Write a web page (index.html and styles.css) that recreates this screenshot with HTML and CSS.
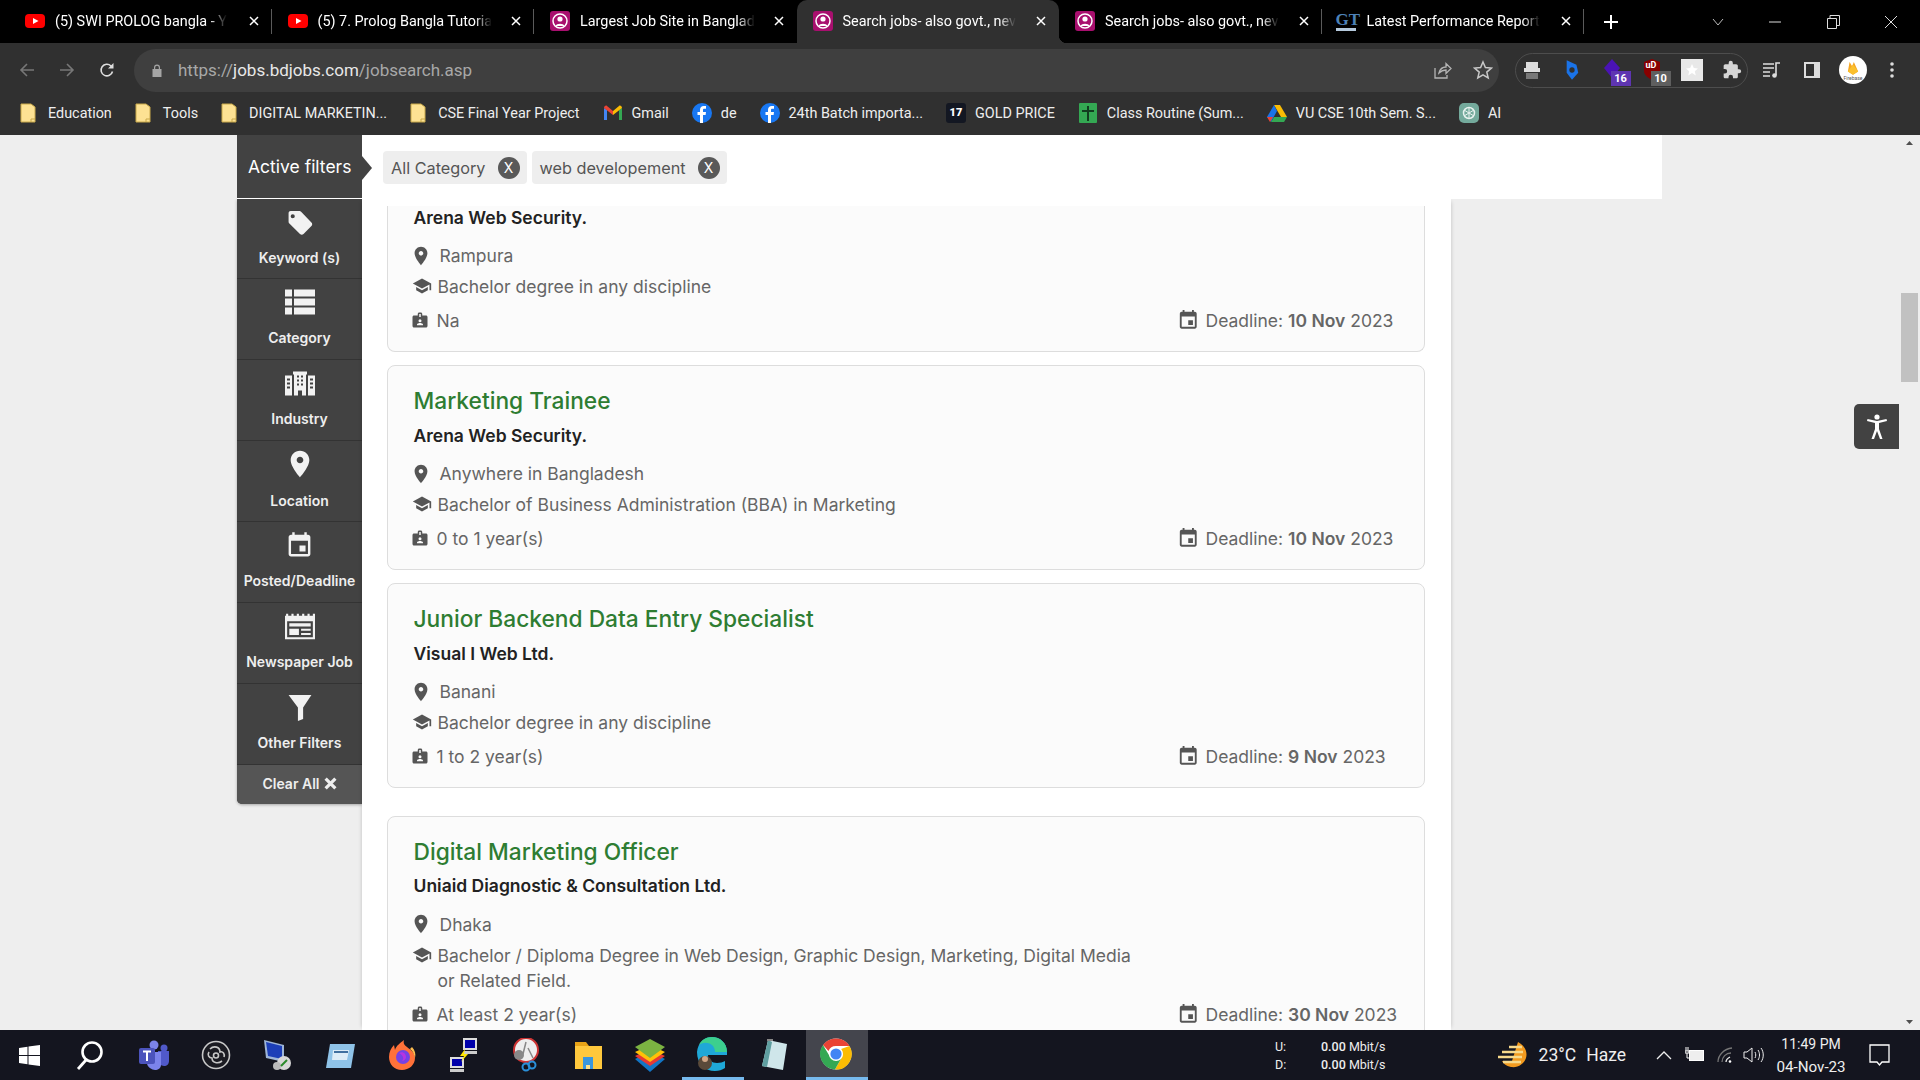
FILE: index.html
```html
<!DOCTYPE html>
<html lang="en">
<head>
  <meta charset="UTF-8">
  <title>Search jobs - Bdjobs</title>
  <link rel="stylesheet" href="styles.css">
</head>
<body>
  <!-- Shared icons -->
  <svg class="sprite" width="0" height="0">
    <symbol id="i-yt" viewBox="0 0 20 20"><rect x="0" y="3" width="20" height="14" rx="4" fill="#f00"/><path d="M8 7l5.5 3L8 13z" fill="#fff"/></symbol>
    <symbol id="i-bd" viewBox="0 0 20 20"><rect width="20" height="20" rx="3" fill="#a80f6e"/><circle cx="10" cy="10" r="7" fill="none" stroke="#fff" stroke-width="1.5"/><circle cx="10" cy="8" r="2.6" fill="#fff"/><path d="M5.5 15c1-3 8-3 9 0z" fill="#fff"/></symbol>
    <symbol id="i-folder" viewBox="0 0 16 20"><path d="M1 1h10l4 3v15H1z" fill="#fde293" stroke="#c9a94a"/><path d="M11 19v-3h4" fill="none" stroke="#c9a94a"/></symbol>
    <symbol id="i-fb" viewBox="0 0 20 20"><circle cx="10" cy="10" r="10" fill="#1877f2"/><path d="M11 20v-8h2.6l.4-3h-3V7.2c0-.9.3-1.4 1.5-1.4H14V3.1c-.4 0-1.300-.1-2.300-.1C9.500 3 8 4.300 8 6.800V9H5.500v3H8v8z" fill="#fff"/></symbol>
    <symbol id="i-place" viewBox="0 0 24 24"><path d="M12 2C8.130 2 5 5.130 5 9c0 5.250 7 13 7 13s7-7.750 7-13c0-3.870-3.130-7-7-7zm0 9.500c-1.380 0-2.500-1.120-2.500-2.500s1.120-2.500 2.500-2.500 2.500 1.120 2.500 2.500-1.120 2.500-2.500 2.500z"/></symbol>
    <symbol id="i-school" viewBox="0 0 24 24"><path d="M5 13.180v4L12 21l7-3.820v-4L12 17l-7-3.820zM12 3L1 9l11 6 9-4.910V17h2V9L12 3z"/></symbol>
    <symbol id="i-badge" viewBox="0 0 24 24"><path fill-rule="evenodd" d="M9 6V4c0-1.100.9-2 2-2h2c1.100 0 2 .9 2 2v2h5c1.100 0 2 .9 2 2v12c0 1.100-.9 2-2 2H4c-1.100 0-2-.9-2-2V8c0-1.100.9-2 2-2zm2-2v4h2V4zm1 7a2 2 0 100 4 2 2 0 000-4zm-4 8h8v-1c0-1.300-2.700-2-4-2s-4 .7-4 2z"/></symbol>
    <symbol id="i-event" viewBox="0 0 24 24"><path d="M17 12h-5v5h5v-5zM16 1v2H8V1H6v2H5c-1.110 0-1.990.9-1.990 2L3 19c0 1.100.89 2 2 2h14c1.100 0 2-.9 2-2V5c0-1.100-.9-2-2-2h-1V1h-2zm3 18H5V8h14v11z"/></symbol>
    <symbol id="i-close" viewBox="0 0 10 10"><path d="M1 1l8 8M9 1l-8 8" fill="none" stroke="currentColor" stroke-width="1.500"/></symbol>
  </svg>

  <!-- Tab strip -->
  <div class="tabstrip">
    <div class="tab"><svg class="favicon"><use href="#i-yt"/></svg><span class="tab-title">(5) SWI PROLOG bangla - Y</span><svg class="tab-x"><use href="#i-close"/></svg></div>
    <div class="tab"><svg class="favicon"><use href="#i-yt"/></svg><span class="tab-title">(5) 7. Prolog Bangla Tutoria</span><svg class="tab-x"><use href="#i-close"/></svg></div>
    <div class="tab tab-before-active"><svg class="favicon"><use href="#i-bd"/></svg><span class="tab-title">Largest Job Site in Banglad</span><svg class="tab-x"><use href="#i-close"/></svg></div>
    <div class="tab tab-active"><svg class="favicon"><use href="#i-bd"/></svg><span class="tab-title">Search jobs- also govt., nev</span><svg class="tab-x"><use href="#i-close"/></svg></div>
    <div class="tab"><svg class="favicon"><use href="#i-bd"/></svg><span class="tab-title">Search jobs- also govt., nev</span><svg class="tab-x"><use href="#i-close"/></svg></div>
    <div class="tab"><span class="favicon favicon-gt">GT</span><span class="tab-title">Latest Performance Report</span><svg class="tab-x"><use href="#i-close"/></svg></div>
    <div class="newtab"><svg width="16" height="16" viewBox="0 0 16 16"><path d="M8 1v14M1 8h14" stroke="#fff" stroke-width="2"/></svg></div>
    <div class="winctl">
      <div class="winbtn winbtn-wide"><svg width="12" height="8" viewBox="0 0 12 8"><path d="M1 1l5 6 5-6" fill="none" stroke="#bbb"/></svg></div>
      <div class="winbtn"><svg width="12" height="2" viewBox="0 0 12 2"><path d="M0 1h12" stroke="#ddd"/></svg></div>
      <div class="winbtn"><svg width="13" height="14" viewBox="0 0 13 14"><path d="M.5 3.500h9v10h-9zM3 3.500V.5h9.500v10H10" fill="none" stroke="#ddd"/></svg></div>
      <div class="winbtn"><svg width="14" height="14" viewBox="0 0 14 14"><path d="M1 1l12 12M13 1L1 13" stroke="#ddd"/></svg></div>
    </div>
  </div>

  <!-- Address bar -->
  <div class="toolbar">
    <svg class="nav-btn" viewBox="0 0 16 16"><path d="M15 8H2M8 2L2 8l6 6" fill="none" stroke="#777" stroke-width="1.600"/></svg>
    <svg class="nav-btn" viewBox="0 0 16 16"><path d="M1 8h13M8 2l6 6-6 6" fill="none" stroke="#777" stroke-width="1.600"/></svg>
    <svg class="nav-btn" viewBox="0 0 16 16"><path d="M13.500 9.500A5.800 5.800 0 1 1 12 4l1.500 1.500" fill="none" stroke="#ddd" stroke-width="1.600"/><path d="M14.500 1v5.500H9z" fill="#ddd"/></svg>
    <div class="urlbar">
      <svg class="lock" width="10" height="13" viewBox="0 0 10 13"><path d="M2 5V3.500a3 3 0 016 0V5h1.500v8H.5V5zm1.200 0h3.600V3.500a1.800 1.800 0 00-3.600 0z" fill="#a5a5a5"/></svg>
      <span class="url">https://<b>jobs.bdjobs.com</b>/jobsearch.asp</span>
      <svg class="url-share" width="20" height="20" viewBox="0 0 20 20"><path d="M3 8v10h12v-3M7 13c1-4 4-6 7-6V3.500l5 5-5 5V10c-3 0-5 1-7 3z" fill="none" stroke="#b5b5b5" stroke-width="1.300"/></svg>
      <svg class="url-star" width="20" height="20" viewBox="0 0 20 20"><path d="M10 2l2.400 5.600 6 .5-4.600 4 1.400 5.900L10 14.900 4.800 18l1.400-5.900-4.600-4 6-.5z" fill="none" stroke="#c8c8c8" stroke-width="1.500"/></svg>
    </div>
    <div class="extensions">
      <div class="ext"><svg width="20" height="22" viewBox="0 0 20 22"><path d="M4 3h12v6H4zM2 9h16v4H2z" fill="#ddd"/><path d="M4 14h12v6H4z" fill="#777"/></svg></div>
      <div class="ext"><svg width="16" height="24" viewBox="0 0 18 24"><path d="M3 1l11 5 2 9-7 8-6-8z" fill="#1a73e8"/><circle cx="9" cy="12" r="3" fill="#303030"/></svg></div>
      <div class="ext"><svg width="20" height="24" viewBox="0 0 20 24"><path d="M10 1l8 9-8 10-8-10z" fill="#4a13b5"/></svg><span class="ext-badge ext-badge-purple">16</span></div>
      <div class="ext"><svg width="20" height="24" viewBox="0 0 20 24"><path d="M10 1l8 3v9c0 4-4 7-8 9-4-2-8-5-8-9V4z" fill="#800"/></svg><span class="ext-mark">uD</span><span class="ext-badge ext-badge-gray">10</span></div>
      <div class="ext"><svg width="22" height="22" viewBox="0 0 22 22"><rect width="22" height="22" fill="#e8e8e8"/><path d="M11 5l1.800 4 4.200.4-3.200 2.800 1 4.200L11 14l-3.800 2.400 1-4.200L5 9.400 9.200 9z" fill="#fff"/></svg></div>
      <div class="ext"><svg width="20" height="20" viewBox="0 0 24 24"><path d="M20.500 11H19V7c0-1.100-.9-2-2-2h-4V3.500a2.500 2.500 0 00-5 0V5H4c-1.100 0-2 .9-2 2v3.800h1.500a2.700 2.700 0 010 5.400H2V20c0 1.100.9 2 2 2h3.800v-1.500a2.700 2.700 0 015.400 0V22H17c1.100 0 2-.9 2-2v-4h1.500a2.500 2.500 0 000-5z" fill="#d5d5d5"/></svg></div>
    </div>
    <svg class="tool-btn" width="20" height="20" viewBox="0 0 20 20"><path d="M1 4h11M1 8h11M1 12h7M1 16h7" stroke="#ddd" stroke-width="1.600"/><path d="M14 15V3h4" fill="none" stroke="#ddd" stroke-width="1.600"/><circle cx="12.500" cy="15.500" r="2.300" fill="#ddd"/></svg>
    <svg class="tool-btn" width="20" height="20" viewBox="0 0 20 20"><path fill-rule="evenodd" d="M2 2h16v16H2zm2 2v12h8V4z" fill="#ddd"/></svg>
    <div class="avatar"><svg width="12" height="16" viewBox="0 0 14 18"><path d="M1 13L3 2l3 5 2-5 5 11-6 4z" fill="#f5a623"/><path d="M1 13l6-8 6 8-6 4z" fill="#fbc02d"/></svg><span class="avatar-label">Firebase</span></div>
    <svg class="tool-btn" width="6" height="18" viewBox="0 0 6 18"><circle cx="3" cy="3" r="1.800" fill="#ddd"/><circle cx="3" cy="9" r="1.800" fill="#ddd"/><circle cx="3" cy="15" r="1.800" fill="#ddd"/></svg>
  </div>

  <!-- Bookmarks -->
  <div class="bookmarks">
    <a class="bm"><svg class="bm-folder"><use href="#i-folder"/></svg>Education</a>
    <a class="bm"><svg class="bm-folder"><use href="#i-folder"/></svg>Tools</a>
    <a class="bm"><svg class="bm-folder"><use href="#i-folder"/></svg>DIGITAL MARKETIN...</a>
    <a class="bm"><svg class="bm-folder"><use href="#i-folder"/></svg>CSE Final Year Project</a>
    <a class="bm"><svg class="bm-icon" viewBox="0 0 20 16"><path d="M1 15V3l3 2v10z" fill="#4285f4"/><path d="M16 15V5l3-2v12z" fill="#34a853"/><path d="M1 3c0-2 2-3 3-2l6 5v4L1 3z" fill="#ea4335"/><path d="M19 3c0-2-2-3-3-2l-6 5v4z" fill="#fbbc04"/></svg>Gmail</a>
    <a class="bm"><svg class="bm-icon"><use href="#i-fb"/></svg>de</a>
    <a class="bm"><svg class="bm-icon"><use href="#i-fb"/></svg>24th Batch importa...</a>
    <a class="bm"><span class="bm-icon bm-tv">17</span>GOLD PRICE</a>
    <a class="bm"><svg class="bm-icon" viewBox="0 0 20 20"><rect x="1" y="0" width="18" height="20" rx="1" fill="#34a853"/><path d="M10 3v15M4 8h12" stroke="#123d20" stroke-width="2"/></svg>Class Routine (Sum...</a>
    <a class="bm"><svg class="bm-icon" viewBox="0 0 20 18"><path d="M7 1h6l7 12h-6z" fill="#fbbc04"/><path d="M7 1l3 6-6 11-4-5z" fill="#1a73e8"/><path d="M4 18l3-5h13l-3 5z" fill="#34a853"/><path d="M0 13l3 5 3-5z" fill="#ea4335"/></svg>VU CSE 10th Sem. S...</a>
    <a class="bm"><svg class="bm-icon" viewBox="0 0 20 20"><rect width="20" height="20" rx="5" fill="#74aa9c"/><circle cx="10" cy="10" r="5.500" fill="none" stroke="#e8f2ef" stroke-width="1.500"/><path d="M10 4.500v11M5 7l10 6M15 7L5 13" stroke="#e8f2ef"/></svg>AI</a>
  </div>

  <!-- Page -->
  <main class="page">
    <div class="wrap">
      <div class="active-filters">
        <div class="af-label">Active filters</div>
        <div class="chip">All Category<span class="chip-x">X</span></div>
        <div class="chip">web developement<span class="chip-x">X</span></div>
      </div>
      <div class="body">
        <nav class="sidebar">
          <a class="side-item"><svg class="side-icon" viewBox="0 0 26 26"><path fill-rule="evenodd" d="M2 2h10c1 0 1.600.3 2.300 1l9.700 10c1 1 1 2.400 0 3.400L16.400 24c-1 1-2.400 1-3.400 0L3 14.300c-.7-.7-1-1.300-1-2.300V4c0-1.100.9-2 2-2zm4 3a2 2 0 100 4 2 2 0 000-4z" /></svg>Keyword (s)</a>
          <a class="side-item"><svg class="side-icon" viewBox="0 0 30 26"><path d="M0 0h7v7H0zM9 0h21v7H9zM0 9h7v7H0zM9 9h21v7H9zM0 18h7v7H0zM9 18h21v7H9z"/></svg>Category</a>
          <a class="side-item"><svg class="side-icon" viewBox="0 0 30 26"><path fill-rule="evenodd" d="M8 1h14v3h-1v21h-4v-5h-4v5H9V4H8zm4 4v2h2V5zm4 0v2h2V5zm-4 4v2h2V9zm4 0v2h2V9zm-4 4v2h2v-2zm4 0v2h2v-2zM0 5h7v20H0zm2 3v2h3V8zm0 4v2h3v-2zm0 4v2h3v-2zM23 5h7v20h-7zm2 3v2h3V8zm0 4v2h3v-2zm0 4v2h3v-2z"/></svg>Industry</a>
          <a class="side-item"><svg class="side-icon side-icon-pin"><use href="#i-place"/></svg>Location</a>
          <a class="side-item"><svg class="side-icon side-icon-event"><use href="#i-event"/></svg>Posted/Deadline</a>
          <a class="side-item"><svg class="side-icon" viewBox="0 0 28 24"><path fill-rule="evenodd" d="M0 2h28v22H0zm2 5v15h24V7zm2 2h20v3H4zm0 5h9v6H4zm11 0h9v2h-9zm0 4h9v2h-9zM1 0h2v2H1zm5 0h2v2H6zm5 0h2v2h-2zm5 0h2v2h-2zm5 0h2v2h-2zm5 0h2v2h-2z"/></svg>Newspaper Job</a>
          <a class="side-item"><svg class="side-icon" viewBox="0 0 24 26"><path d="M1 1h22l-8 12v11l-5 2V13z"/></svg>Other Filters</a>
          <a class="clear-all">Clear All <svg width="13" height="13" viewBox="0 0 12 12"><path d="M1.500 1.500l9 9M10.500 1.500l-9 9" stroke="#eee" stroke-width="3"/></svg></a>
        </nav>

        <section class="results">
          <article class="card card-cut">
            <div class="company">Arena Web Security.</div>
            <div class="row row-loc"><svg class="ico-place"><use href="#i-place"/></svg>Rampura</div>
            <div class="row row-edu"><svg class="ico-school"><use href="#i-school"/></svg><span class="edu-text">Bachelor degree in any discipline</span></div>
            <div class="row row-exp"><svg class="ico-badge"><use href="#i-badge"/></svg>Na<span class="deadline"><svg class="ico-event"><use href="#i-event"/></svg>Deadline:&nbsp;<b>10 Nov</b>&nbsp;2023</span></div>
          </article>
          <article class="card">
            <h3 class="job-title">Marketing Trainee</h3>
            <div class="company">Arena Web Security.</div>
            <div class="row row-loc"><svg class="ico-place"><use href="#i-place"/></svg>Anywhere in Bangladesh</div>
            <div class="row row-edu"><svg class="ico-school"><use href="#i-school"/></svg><span class="edu-text">Bachelor of Business Administration (BBA) in Marketing</span></div>
            <div class="row row-exp"><svg class="ico-badge"><use href="#i-badge"/></svg>0 to 1 year(s)<span class="deadline"><svg class="ico-event"><use href="#i-event"/></svg>Deadline:&nbsp;<b>10 Nov</b>&nbsp;2023</span></div>
          </article>
          <article class="card">
            <h3 class="job-title">Junior Backend Data Entry Specialist</h3>
            <div class="company">Visual I Web Ltd.</div>
            <div class="row row-loc"><svg class="ico-place"><use href="#i-place"/></svg>Banani</div>
            <div class="row row-edu"><svg class="ico-school"><use href="#i-school"/></svg><span class="edu-text">Bachelor degree in any discipline</span></div>
            <div class="row row-exp"><svg class="ico-badge"><use href="#i-badge"/></svg>1 to 2 year(s)<span class="deadline"><svg class="ico-event"><use href="#i-event"/></svg>Deadline:&nbsp;<b>9 Nov</b>&nbsp;2023</span></div>
          </article>
          <article class="card card-gap">
            <h3 class="job-title">Digital Marketing Officer</h3>
            <div class="company">Uniaid Diagnostic &amp; Consultation Ltd.</div>
            <div class="row row-loc"><svg class="ico-place"><use href="#i-place"/></svg>Dhaka</div>
            <div class="row row-edu"><svg class="ico-school"><use href="#i-school"/></svg><span class="edu-text">Bachelor / Diploma Degree in Web Design, Graphic Design, Marketing, Digital Media or Related Field.</span></div>
            <div class="row row-exp"><svg class="ico-badge"><use href="#i-badge"/></svg>At least 2 year(s)<span class="deadline"><svg class="ico-event"><use href="#i-event"/></svg>Deadline:&nbsp;<b>30 Nov</b>&nbsp;2023</span></div>
          </article>
        </section>
      </div>
    </div>

    <!-- Floating bits -->
    <div class="access-btn"><svg width="22" height="26" viewBox="0 0 22 26"><circle cx="11" cy="3" r="2.600" fill="#fff"/><path d="M1 7l8 2v6l-3.500 10h2.500L11 17l3 8h2.500L13 15V9l8-2-.5-2L11 7 1.500 5z" fill="#fff"/></svg></div>
    <div class="scrollbar">
      <svg width="17" height="17" viewBox="0 0 17 17"><path d="M5 10l3.500-4 3.500 4z" fill="#505050"/></svg>
      <div class="scroll-thumb"></div>
      <svg class="scroll-down" width="17" height="17" viewBox="0 0 17 17"><path d="M5 7l3.500 4 3.500-4z" fill="#505050"/></svg>
    </div>
  </main>

  <!-- Windows taskbar -->
  <footer class="taskbar">
    <div class="task-icons">
      <div class="task"><svg width="21" height="21" viewBox="0 0 21 21"><path d="M0 3l8.500-1.200V10H0zM9.500 1.600L21 0v10H9.500zM0 11h8.500v8.200L0 18zM9.500 11H21v10L9.500 19.400z" fill="#fff"/></svg></div>
      <div class="task task-search"><svg width="28" height="30" viewBox="0 0 28 30"><circle cx="16" cy="12" r="9.500" fill="none" stroke="#fff" stroke-width="2.600"/><path d="M10 20L2 29" stroke="#fff" stroke-width="2.800"/></svg></div>
      <div class="task"><svg width="32" height="30" viewBox="0 0 32 30"><circle cx="16" cy="5" r="4.500" fill="#7b83eb"/><circle cx="26" cy="8" r="3.500" fill="#5059c9"/><path d="M20 11h11v10c0 3-2 5-5 5s-6-3-6-5z" fill="#5059c9"/><path d="M9 12h14v13c0 3-3 5-6 5s-8-3-8-7z" fill="#7b83eb"/><rect x="1" y="8" width="16" height="16" rx="2" fill="#4b53bc"/><path d="M5 11.500h8M9 11.500V21" stroke="#fff" stroke-width="2"/></svg></div>
      <div class="task"><svg width="30" height="30" viewBox="0 0 30 30"><circle cx="15" cy="15" r="13.500" fill="#1b1b22" stroke="#c8c8c8" stroke-width="1.600"/><path d="M9 9c4-4 10-2 10 3 3-1 5 2 4 5M21 21c-4 3-10 2-10-3-3 0-5-3-3-6M15 13a2.500 2.500 0 100 5 2.500 2.500 0 000-5z" fill="none" stroke="#c8c8c8" stroke-width="1.600"/></svg></div>
      <div class="task"><svg width="30" height="32" viewBox="0 0 30 32"><path d="M1 1l20 5v17L3 19z" fill="#9fb6d8"/><path d="M3 3l16 4v13L5 17z" fill="#1d3fb8"/><circle cx="21" cy="24" r="7" fill="#d8d8d8"/><circle cx="14" cy="27" r="4" fill="#bbb"/><path d="M18 27l6-6" stroke="#2a8a2a" stroke-width="2"/></svg></div>
      <div class="task"><svg width="30" height="26" viewBox="0 0 30 26"><path d="M5 2h25l-4 24H1z" fill="#8fc3e8"/><path d="M8 8h16l-2 10H7z" fill="#dcecf7"/><path d="M9 9h14v2H9z" fill="#3f6f9f"/></svg></div>
      <div class="task"><svg width="28" height="32" viewBox="0 0 28 32"><path d="M14 31C6 31 1 25 1 18 1 13 3 9 6 6l1 5c1-4 5-7 9-10-1 3 0 5 3 7 4 3 8 6 8 11 0 7-6 12-13 12z" fill="#ff7139"/><path d="M24 8c3 3 4 7 3 11-1-4-2-7-5-9z" fill="#ffbd4f"/><circle cx="15" cy="18" r="7" fill="#7542e5"/><path d="M11 14c3-2 7 0 7 4 0 2-2 4-4 4 2-2 2-5-3-8z" fill="#b833e1"/></svg></div>
      <div class="task"><svg width="30" height="36" viewBox="0 0 30 36"><rect x="14" y="1" width="14" height="12" fill="#ddd"/><rect x="16" y="3" width="10" height="8" fill="#0000aa"/><rect x="15" y="14" width="13" height="3" fill="#ccc"/><rect x="1" y="20" width="14" height="11" fill="#ddd"/><rect x="3" y="22" width="10" height="7" fill="#0000aa"/><rect x="1" y="32" width="14" height="3" fill="#ccc"/><path d="M16 12l-5 7h4l-3 6 7-8h-4z" fill="#ffe600"/></svg></div>
      <div class="task"><svg width="30" height="34" viewBox="0 0 30 34"><ellipse cx="15" cy="12" rx="12" ry="12" fill="#eee" stroke="#c33" stroke-width="2"/><path d="M15 4l-3 12M22 20l-5-10" stroke="#888" stroke-width="1.500"/><circle cx="8" cy="17" r="5" fill="#888"/><circle cx="21" cy="27" r="3.500" fill="none" stroke="#2a8fd8" stroke-width="2"/><circle cx="15" cy="29" r="3.500" fill="none" stroke="#2a8fd8" stroke-width="2"/></svg></div>
      <div class="task"><svg width="28" height="28" viewBox="0 0 28 28"><path d="M1 1h11l3 4H1z" fill="#e8a317"/><rect x="1" y="5" width="27" height="23" fill="#ffc83d"/><path d="M9 16h10v12H9z" fill="#3a96dd"/><path d="M12 24h4v4h-4z" fill="#ffe08a"/></svg></div>
      <div class="task"><svg width="30" height="34" viewBox="0 0 30 34"><path d="M15 14l15 7-15 13L0 21z" fill="#1275c4"/><path d="M15 11l15 7-15 10L0 18z" fill="#e53935"/><path d="M15 7l15 7-15 10L0 14z" fill="#ffc107"/><path d="M15 1l15 8-15 11L0 9z" fill="#7cb342"/></svg></div>
      <div class="task"><svg width="31" height="34" viewBox="0 0 31 34"><path d="M1 15C2 6 8 0 16 0c8 0 15 6 15 15v3H12c0 5 4 8 9 8 3 0 6-1 8-2v7c-3 2-6 3-10 3C9 34 1 27 1 15z" fill="#1fa8d8"/><path d="M31 15C31 6 24 0 16 0 10 0 5 3 3 8c4-3 9-3 13 0 2 2 3 4 3 7z" fill="#3ccf8e"/><circle cx="9" cy="26" r="7" fill="#5a4a3a"/><circle cx="9" cy="22" r="3" fill="#d0a888"/></svg></div>
      <div class="task"><svg width="26" height="32" viewBox="0 0 26 32"><path d="M7 1l19 4-4 26L1 27z" fill="#cfe6ea"/><path d="M7 1L1 27l5 1 5-25z" fill="#5f9ea0"/><path d="M6 0h6v2H6z" fill="#888"/></svg></div>
      <div class="task task-active"><svg width="32" height="32" viewBox="0 0 32 32"><circle cx="16" cy="16" r="15.500" fill="#fff"/><path d="M16 .5A15.500 15.500 0 0129.500 8H16a8 8 0 00-7.500 5L3 7A15.500 15.500 0 0116 .5z" fill="#ea4335"/><path d="M29.500 8A15.500 15.500 0 0115 31.500L22 19a8 8 0 00-1-8z" fill="#fbbc04"/><path d="M15 31.500A15.500 15.500 0 013 7l6.500 11a8 8 0 0012.500 1z" fill="#34a853"/><circle cx="16" cy="16" r="7" fill="#fff"/><circle cx="16" cy="16" r="5.600" fill="#4285f4"/></svg></div>
    </div>
    <div class="netspeed">
      <span>U:</span><span><b>0.00</b> Mbit/s</span>
      <span>D:</span><span><b>0.00</b> Mbit/s</span>
    </div>
    <svg class="weather-icon" width="31" height="26" viewBox="0 0 31 26"><path d="M21 0c6 3 10 9 8 16-2 6-8 10-15 9-5-1-8-4-9-6h10z" fill="#f29a1f"/><path d="M12 5h13M5 10h21M1 15h24M6 20h18" stroke="#f7d98b" stroke-width="2.400"/></svg>
    <div class="weather"><span>23°C</span><span>Haze</span></div>
    <svg class="tray-chevron" width="16" height="9" viewBox="0 0 16 9"><path d="M1 8l7-7 7 7" fill="none" stroke="#eee" stroke-width="1.300"/></svg>
    <svg class="tray-battery" width="20" height="16" viewBox="0 0 20 16"><path d="M1 0v4M3 0v4M0 4h4v2H0zM2 6v5h2" fill="none" stroke="#fff"/><rect x="4.500" y="3.500" width="14" height="10" fill="#eee" stroke="#fff"/></svg>
    <svg class="tray-wifi" width="16" height="16" viewBox="0 0 16 16"><path d="M1 15C1 8 7 2 15 1M5 15c0-5 4-9 9-9" fill="none" stroke="#777" stroke-width="1.300"/><path d="M9 15c0-3 2-4 4-5" fill="none" stroke="#eee" stroke-width="1.300"/><circle cx="13" cy="14.500" r="1.300" fill="#fff"/></svg>
    <svg class="tray-volume" width="21" height="18" viewBox="0 0 21 18"><path d="M1 6h3l5-4v14l-5-4H1zM12 6c1 2 1 4 0 6M15 4c2 3 2 7 0 10M18 2c3 4 3 10 0 14" fill="none" stroke="#eee"/></svg>
    <div class="clock"><div class="clock-time">11:49 PM</div><div>04-Nov-23</div></div>
    <svg class="tray-notify" width="21" height="23" viewBox="0 0 21 23"><path d="M1 1h19v17h-7l-2.500 3L8 18H1z" fill="none" stroke="#fff" stroke-width="1.300"/></svg>
  </footer>
</body>
</html>
```

FILE: styles.css
```css
/* Global */
* {
  box-sizing: border-box;
}
html, body {
  height: 100%;
}
body {
  margin: 0;
  display: flex;
  flex-direction: column;
  height: 1080px;
  overflow: hidden;
  font-family: Inter, "Liberation Sans", sans-serif;
  background-color: #eee;
}
.sprite {
  position: absolute;
}

/* Tab strip */
.tabstrip {
  display: flex;
  align-items: stretch;
  height: 43px;
  padding-left: 9px;
  background-color: #000;
  color: #fff;
  font-family: Roboto, sans-serif;
  font-size: 14.400px;
}
.tab {
  position: relative;
  display: flex;
  align-items: center;
  width: 262.500px;
  padding: 0 13px 1px 16px;
}
.tab::after {
  content: "";
  position: absolute;
  right: 0;
  top: 9px;
  height: 25px;
  width: 1px;
  background-color: #5a5a5a;
}
.tab-before-active::after,
.tab-active::after {
  display: none;
}
.tab-active {
  background-color: #303030;
  border-radius: 10px 10px 0 0;
}
.tab-active::before {
  content: "";
  position: absolute;
  right: -8px;
  bottom: 0;
  width: 8px;
  height: 8px;
  background: radial-gradient(circle at 100% 0, #000 8px, #303030 8.5px);
}
.favicon {
  flex: none;
  width: 20px;
  height: 20px;
  margin-right: 10px;
}
.favicon-gt {
  margin-left: -2px;
  margin-right: 11px;
  font-family: "Liberation Serif", serif;
  font-weight: bold;
  font-size: 17px;
  line-height: 17px;
  color: #4d82b8;
  border-bottom: 3px solid #b5c9dc;
}
.tab-title {
  white-space: nowrap;
  -webkit-mask-image: linear-gradient(to right, #000 90%, transparent);
  mask-image: linear-gradient(to right, #000 90%, transparent);
}
.tab-x {
  flex: none;
  width: 10px;
  height: 10px;
  margin-left: auto;
  color: #fff;
}
.newtab {
  display: flex;
  align-items: center;
  margin-left: 19px;
}
.winctl {
  display: flex;
  margin-left: auto;
}
.winbtn {
  display: flex;
  align-items: center;
  justify-content: center;
  width: 58px;
}
.winbtn-wide {
  width: 56px;
}

/* Toolbar */
.toolbar {
  display: flex;
  align-items: center;
  height: 54px;
  padding-left: 19px;
  background-color: #303030;
}
.nav-btn {
  width: 16px;
  height: 16px;
  margin-right: 24px;
  flex: none;
}
.urlbar {
  display: flex;
  align-items: center;
  flex: none;
  width: 1365px;
  height: 43px;
  margin-left: -5px;
  padding: 0 6px 0 18px;
  border-radius: 22px;
  background-color: #3f3f3f;
  font-family: Roboto, sans-serif;
  font-size: 17px;
  color: #a8a8a8;
}
.lock {
  margin-right: 16px;
}
.url b {
  font-weight: 400;
  color: #e8e8e8;
}
.url-share {
  margin-left: auto;
  margin-right: 21px;
}
.extensions {
  display: flex;
  align-items: center;
  justify-content: center;
  flex: none;
  width: 233px;
  height: 35px;
  margin-left: 16px;
  border: 1px solid #4d4d4d;
  border-radius: 18px;
}
.ext {
  position: relative;
  display: flex;
  align-items: center;
  justify-content: center;
  flex: none;
  width: 40px;
}
.ext-badge {
  position: absolute;
  left: 19px;
  top: 13px;
  width: 20px;
  height: 15px;
  font-family: Roboto, sans-serif;
  font-size: 11px;
  font-weight: 700;
  line-height: 15px;
  text-align: center;
  color: #fff;
}
.ext-badge-purple {
  background-color: #5e35b1;
}
.ext-badge-gray {
  background-color: #5f5f5f;
}
.ext-mark {
  position: absolute;
  left: 14px;
  top: 2px;
  font-family: Roboto, sans-serif;
  font-size: 9px;
  font-weight: 700;
  color: #fff;
}
.tool-btn {
  flex: none;
  margin-left: 14px;
}
.tool-btn + .tool-btn {
  margin-left: 20px;
}
.avatar {
  display: flex;
  flex-direction: column;
  align-items: center;
  justify-content: center;
  flex: none;
  width: 28px;
  height: 28px;
  margin-left: 17px;
  margin-right: 2px;
  border-radius: 50%;
  background-color: #fff;
}
.avatar-label {
  font-family: Roboto, sans-serif;
  font-size: 5px;
  line-height: 5px;
  color: #555;
}
.avatar + .tool-btn {
  margin-left: 20px;
}

/* Bookmarks */
.bookmarks {
  display: flex;
  align-items: center;
  gap: 23px;
  height: 38px;
  padding: 0 0 6px 20px;
  background-color: #303030;
  color: #eee;
  font-family: Roboto, sans-serif;
  font-size: 14.400px;
  white-space: nowrap;
}
.bm {
  display: flex;
  align-items: center;
}
.bm-folder {
  width: 16px;
  height: 20px;
  margin-right: 12px;
}
.bm-icon {
  width: 20px;
  height: 20px;
  margin-right: 9px;
}
.bm-tv {
  display: block;
  background-color: #131722;
  border-radius: 3px;
  font-size: 11px;
  font-weight: 900;
  line-height: 20px;
  text-align: center;
  color: #fff;
}

/* Page */
.page {
  position: relative;
  flex: 1;
  min-height: 0;
  overflow: hidden;
  padding-left: 237px;
  background-color: #eee;
}
.wrap {
  display: flex;
  flex-direction: column;
  height: 100%;
  width: 1425px;
}

/* Active filters */
.active-filters {
  position: relative;
  z-index: 2;
  display: flex;
  align-items: center;
  flex: none;
  gap: 5px;
  height: 64px;
  padding-top: 1px;
  background-color: #fff;
  font-size: 16.250px;
  color: #555;
}
.af-label {
  position: relative;
  display: flex;
  align-items: center;
  align-self: stretch;
  width: 125px;
  margin: -1px 16px 0 0;
  padding: 0 0 0 11px;
  border-bottom: 1px solid #fff;
  background-color: #424242;
  color: #fff;
  font-size: 17.500px;
}
.af-label::after {
  content: "";
  position: absolute;
  left: 100%;
  top: 21px;
  border-left: 10px solid #424242;
  border-top: 12px solid transparent;
  border-bottom: 12px solid transparent;
}
.chip {
  display: flex;
  align-items: center;
  justify-content: space-between;
  gap: 12px;
  height: 33px;
  padding: 0 7px 0 8px;
  border-radius: 4px;
  background-color: #eee;
}
.chip-x {
  width: 22px;
  height: 22px;
  border-radius: 50%;
  background-color: #595959;
  color: #fff;
  font-size: 14px;
  line-height: 22px;
  text-align: center;
}

/* Sidebar */
.body {
  display: flex;
  flex: 1;
  min-height: 0;
  width: 1214px;
}
.sidebar {
  flex: none;
  align-self: flex-start;
  width: 125px;
  border-radius: 0 0 0 5px;
  overflow: hidden;
  background-color: #424242;
  box-shadow: 0 1px 3px rgba(0,0,0,0.3);
}
.side-item {
  display: flex;
  flex-direction: column;
  align-items: center;
  height: 81px;
  padding-top: 10px;
  border-bottom: 1px solid #333;
  color: #eee;
  font-size: 14px;
  font-weight: 600;
  line-height: 20px;
}
.side-item:first-child {
  height: 80px;
}
.side-icon {
  flex: none;
  width: 30px;
  height: 27px;
  margin-bottom: 12px;
  fill: #f2f2f2;
}
.side-icon-pin {
  width: 32px;
  height: 32px;
  margin: -3px 0 10.500px;
}
.side-icon-event {
  width: 29px;
  height: 29px;
  margin: -1px 0 11px;
}
.clear-all {
  display: flex;
  align-items: center;
  justify-content: center;
  gap: 4px;
  height: 39px;
  padding-bottom: 2px;
  background-color: #555;
  color: #eee;
  font-size: 14px;
  font-weight: 600;
}

/* Result list */
.results {
  flex: none;
  width: 1089px;
  height: 100%;
  overflow: hidden;
  padding: 0 26px 0 25px;
  background-color: #fff;
  box-shadow: -3px 0 4px -3px rgba(0,0,0,0.2), 3px 0 4px -3px rgba(0,0,0,0.2);
}
.card {
  margin-bottom: 13px;
  padding: 19px 26px 18px 25.500px;
  border: 1px solid #ddd;
  border-radius: 8px;
  background-color: #fbfbfb;
}
.card-cut {
  padding-top: 0;
  border-top: none;
  border-radius: 0 0 8px 8px;
}
.card-cut .company {
  margin-top: 7px;
}
.card-gap {
  margin-top: 27.500px;
}
.job-title {
  margin: 0;
  font-size: 22.750px;
  font-weight: 500;
  line-height: 32px;
  color: #2e7d32;
}
.company {
  margin-top: 6.500px;
  font-size: 17.500px;
  font-weight: 600;
  line-height: 24px;
  color: #222;
}
.row {
  display: flex;
  align-items: flex-start;
  font-size: 17.500px;
  line-height: 25px;
  color: #666;
}
.row svg {
  fill: #555;
  flex: none;
}
.row-loc {
  margin-top: 13.400px;
}
.row-edu {
  margin-top: 6px;
}
.row-exp {
  margin-top: 9px;
}
.edu-text {
  max-width: 700px;
}
.ico-place {
  width: 22px;
  height: 22px;
  margin: 1.500px 7.600px 0 -3.600px;
}
.ico-school {
  width: 20px;
  height: 20px;
  margin: 2px 5.800px 0 -1.800px;
}
.ico-badge {
  width: 18px;
  height: 18px;
  margin: 3px 7.500px 0 -2.500px;
}
.deadline {
  display: flex;
  width: 221px;
  margin-left: auto;
}
.deadline b {
  font-weight: 600;
}
.ico-event {
  width: 22.500px;
  height: 22.500px;
  margin: 1px 6px 0 0;
}

/* Floating accessibility button and scrollbar */
.access-btn {
  position: absolute;
  right: 21px;
  top: 269px;
  display: flex;
  align-items: center;
  justify-content: center;
  width: 45px;
  height: 45px;
  border-radius: 5px 0 0 5px;
  background-color: #424242;
}
.scrollbar {
  position: absolute;
  top: 0;
  right: 2px;
  bottom: 0;
  width: 17px;
  display: flex;
  flex-direction: column;
}
.scroll-thumb {
  width: 17px;
  height: 89px;
  margin-top: 141px;
  background-color: #c1c1c1;
}
.scroll-down {
  margin-top: auto;
}

/* Taskbar */
.taskbar {
  display: flex;
  align-items: center;
  flex: none;
  height: 50px;
  background-color: #14151f;
  color: #eee;
  font-family: Roboto, sans-serif;
}
.task-icons {
  display: flex;
  height: 100%;
}
.task {
  display: flex;
  align-items: center;
  justify-content: center;
  width: 62px;
}
.task svg {
  margin-right: 3px;
}
.task-search svg {
  margin-right: 7px;
}
.task-active svg {
  margin-right: 2px;
}
.task:nth-child(12) {
  border-bottom: 3px solid #76b9ed;
}
.task-active {
  background-color: #44454d;
  border-bottom: 3px solid #76b9ed;
}
.netspeed {
  display: grid;
  grid-template-columns: 46px auto;
  row-gap: 3px;
  margin: 1px 0 0 407px;
  font-size: 12.500px;
  line-height: 15px;
}
.netspeed b {
  font-weight: 500;
}
.weather-icon {
  margin-left: 111px;
  flex: none;
}
.weather {
  display: flex;
  gap: 10px;
  margin-left: 11px;
  font-size: 17.500px;
}
.tray-chevron {
  margin-left: 30px;
}
.tray-battery {
  margin-left: 13px;
}
.tray-wifi {
  margin-left: 12px;
}
.tray-volume {
  margin-left: 10px;
}
.clock {
  width: 80px;
  margin: 2px 0 0 7px;
  font-size: 15.200px;
  line-height: 23px;
  text-align: center;
}
.clock-time {
  font-size: 14px;
}
.tray-notify {
  margin-left: 18px;
}
```
